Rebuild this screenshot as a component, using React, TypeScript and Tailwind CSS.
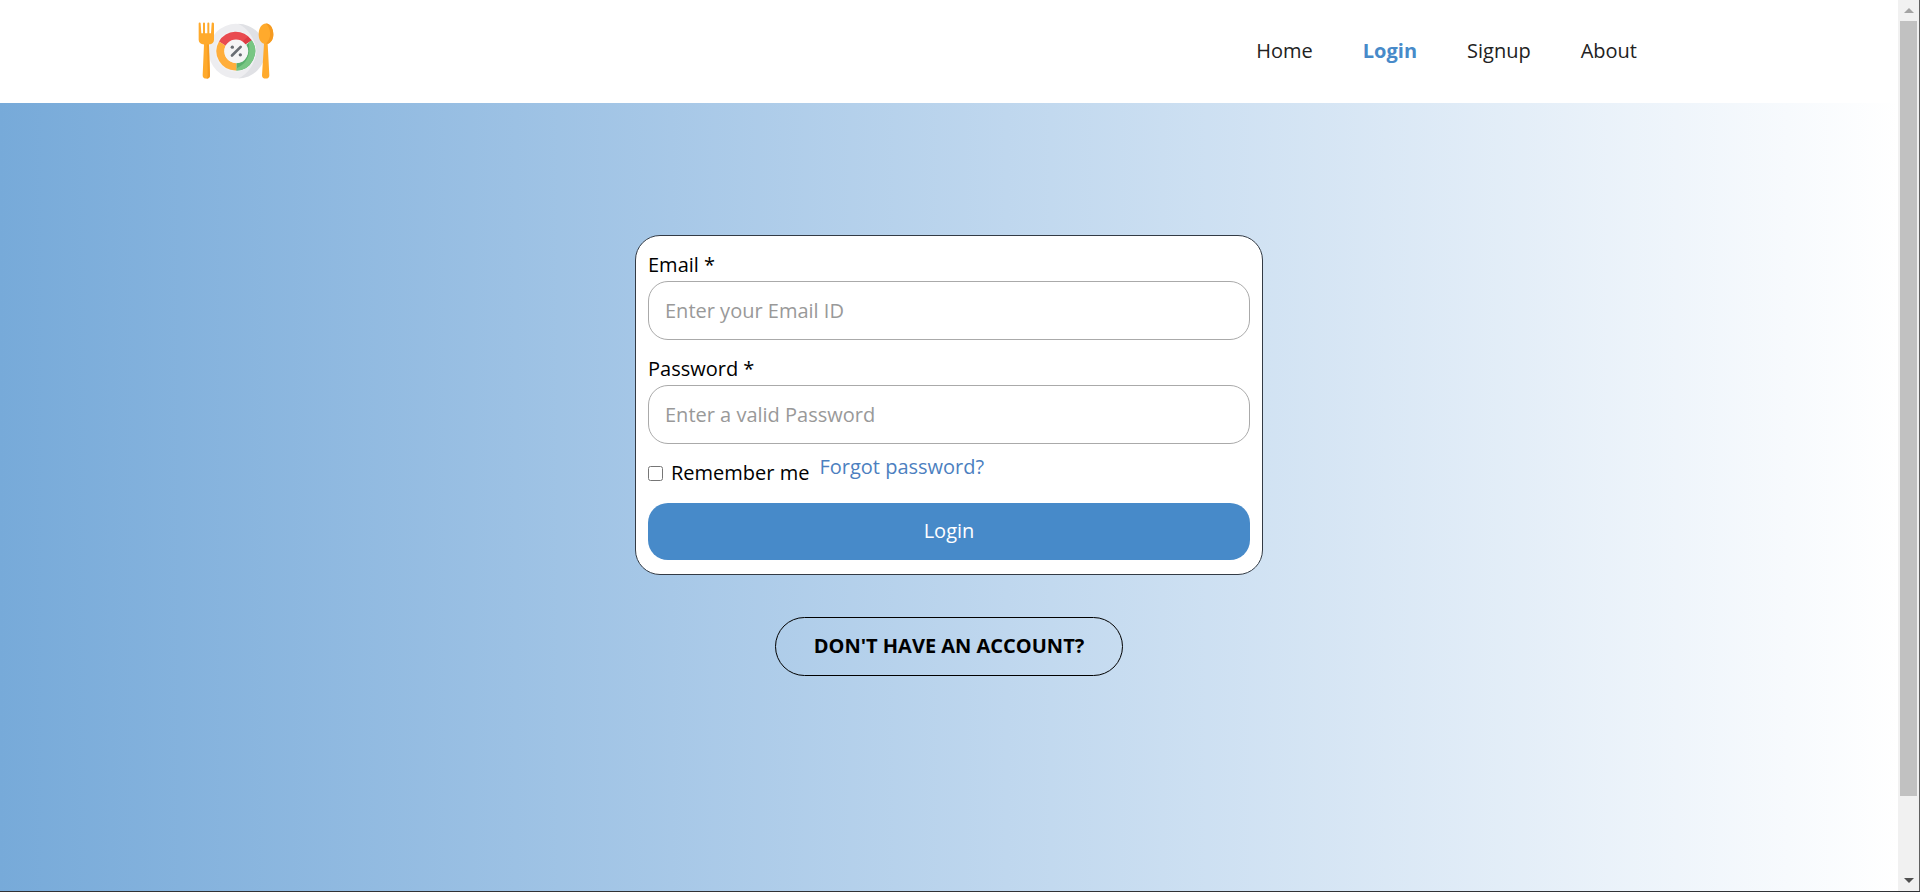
import React from "react";

const links = ["Home", "Login", "Signup", "About"];

function Logo() {
  return (
    <svg viewBox="0 0 228 170" className="h-[57px] w-[76px]" aria-hidden="true">
      <circle cx="114" cy="87" r="82" fill="#ededf0" />
      <path d="M120 5A82 82 0 0 1 120 169A90 90 0 0 0 120 5Z" fill="#e0e1e5" />
      <circle cx="113" cy="87" r="62" fill="#f1f1f3" />
      <path d="M63 58A58 58 0 0 1 161 54L141 67A36 36 0 0 0 83 71Z" fill="#e94b50" />
      <path d="M150 43L161 54L141 67L131 60Z" fill="#dd3c44" />
      <path d="M161 54A58 58 0 0 1 115 145V123A36 36 0 0 0 145 68Z" fill="#5ab06d" />
      <path d="M161 54A58 58 0 0 1 115 145L115 139Q163 116 152 61Z" fill="#78c683" />
      <path d="M115 145A58 58 0 0 1 63 58L83 71A36 36 0 0 0 115 123Z" fill="#ffae3c" />
      <circle cx="114" cy="87" r="35" fill="#f5f5f6" />
      <path d="M102 100L128 74" stroke="#686d73" strokeWidth="8" strokeLinecap="round" />
      <circle cx="103" cy="75" r="5" fill="#686d73" />
      <circle cx="127" cy="98" r="5" fill="#686d73" />
      <path d="M2 4Q2 1 5 1T8 4L10 33H15V4Q15 1 18 1T21 4V33H28V4Q28 1 31 1T34 4V33H39L41 4Q41 1 44 1T48 4V53Q48 65 33 67L36 159Q36 169 25 169T14 159L18 67Q2 65 2 53Z" fill="#ffaa2c" />
      <path d="M28 67L32 67L36 159Q36 169 25 169Q30 166 29 156Z" fill="#f59a20" />
      <path d="M204 4C218 4 226 20 226 36C226 52 218 62 209 65L214 159Q214 169 203 169T192 159L198 65C188 61 182 51 182 36C182 20 190 4 204 4Z" fill="#ffaa2c" />
      <path d="M204 4C218 4 226 20 226 36C226 52 218 62 209 65L204 64C222 48 219 19 204 4Z" fill="#f59a20" />
    </svg>
  );
}

function Scrollbar() {
  return (
    <div aria-hidden="true" className="flex w-[22px] shrink-0 flex-col items-center border-r border-[#606060] bg-[#f1f1f1]">
      <svg viewBox="0 0 10 5" className="my-2 h-[5px] w-[10px] shrink-0"><path d="M5 0L10 5H0Z" fill="#a3a3a3" /></svg>
      <div className="flex w-full grow flex-col px-[2px]">
        <div className="grow-[775] bg-[#c1c1c1]" />
        <div className="grow-[74]" />
      </div>
      <svg viewBox="0 0 10 5" className="my-2 h-[5px] w-[10px] shrink-0"><path d="M0 0H10L5 5Z" fill="#505050" /></svg>
    </div>
  );
}

function Field({ id, label, type, placeholder }: { id: string; label: string; type: string; placeholder: string }) {
  return (
    <div className="flex flex-col">
      <label htmlFor={id} className="mb-[2px] leading-7">{label}</label>
      <input
        id={id}
        type={type}
        placeholder={placeholder}
        className="h-[59px] w-full rounded-[20px] border border-[#aaaaaa] bg-white px-4 outline-none placeholder:text-[#999999]"
      />
    </div>
  );
}

export default function App() {
  return (
    <div className="flex min-h-screen border-b border-[#303236] bg-white font-['Open_Sans',sans-serif] text-[20px] text-black">
      <div className="flex min-w-0 grow flex-col">
        <header className="flex h-[103px] shrink-0 items-center justify-between bg-white pr-[261px] pb-[2px] pl-[198px]">
          <a href="#home" aria-label="Home page"><Logo /></a>
          <nav className="flex gap-[50px]">
            {links.map((name) => (
              <a key={name} href={"#" + name.toLowerCase()} className={name === "Login" ? "font-bold text-[#478ac9]" : "text-[#222222]"}>
                {name}
              </a>
            ))}
          </nav>
        </header>
        <main className="flex grow flex-col items-center bg-linear-to-r from-[#77aad9] to-white pt-[132px]">
          <form onSubmit={(e) => e.preventDefault()} className="w-full max-w-[628px] rounded-[25px] border border-[#333b45] bg-white px-3 pt-[15px] pb-[14px]">
            <div className="flex flex-col gap-[15px]">
              <Field id="email" label="Email *" type="email" placeholder="Enter your Email ID" />
              <Field id="password" label="Password *" type="password" placeholder="Enter a valid Password" />
            </div>
            <div className="mt-[7px] mb-4 flex gap-[10px]">
              <div className="flex items-center gap-2 pt-2">
                <input id="remember" type="checkbox" className="size-[15px]" />
                <label htmlFor="remember" className="leading-7">Remember me</label>
              </div>
              <a href="#forgot" className="leading-8 text-[#4c7fbf]">Forgot password?</a>
            </div>
            <button type="submit" className="h-[57px] w-full rounded-[20px] bg-[#478ac9] pb-[2px] text-white">Login</button>
          </form>
          <a href="#signup" className="mt-[42px] flex h-[59px] items-center rounded-full border border-black px-[38px] pb-[2px] font-bold">
            DON'T HAVE AN ACCOUNT?
          </a>
        </main>
      </div>
      <Scrollbar />
    </div>
  );
}
